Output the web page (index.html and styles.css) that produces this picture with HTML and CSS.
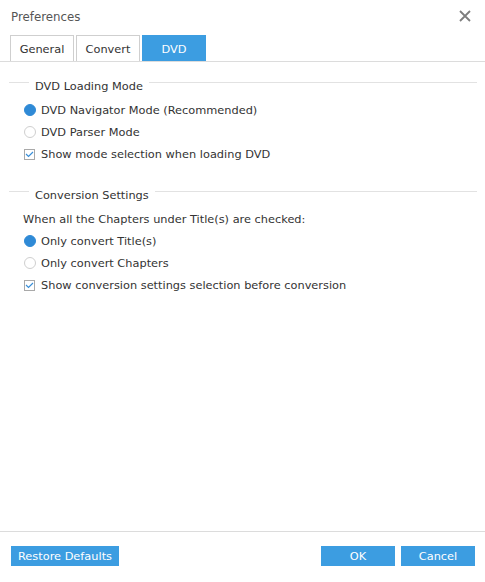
FILE: index.html
```html
<!DOCTYPE html>
<html>
<head>
<meta charset="utf-8">
<link rel="stylesheet" href="styles.css">
</head>
<body>
<div class="dialog">
  <div class="header">
    <span class="title">Preferences</span>
    <svg class="close" width="12" height="12" viewBox="0 0 12 12"><path d="M1 1 L11 11 M11 1 L1 11" stroke="#7d7d7d" stroke-width="1.8" fill="none"/></svg>
  </div>
  <div class="tabs">
    <div class="tab">General</div>
    <div class="tab">Convert</div>
    <div class="tab active">DVD</div>
  </div>
  <div class="content">
    <div class="section">
      <div class="legend"><span class="lline short"></span><span class="ltext">DVD Loading Mode</span><span class="lline grow"></span></div>
      <div class="row opt"><span class="radio on"></span><span>DVD Navigator Mode (Recommended)</span></div>
      <div class="row opt"><span class="radio"></span><span>DVD Parser Mode</span></div>
      <div class="row opt"><span class="check"><svg width="9" height="7" viewBox="0 0 9 7"><path d="M1 3 L3.5 5.5 L8 1" stroke="#3a8fd8" stroke-width="1.2" fill="none"/></svg></span><span>Show mode selection when loading DVD</span></div>
    </div>
    <div class="section second">
      <div class="legend"><span class="lline short"></span><span class="ltext">Conversion Settings</span><span class="lline grow"></span></div>
      <div class="row desc">When all the Chapters under Title(s) are checked:</div>
      <div class="row opt"><span class="radio on"></span><span>Only convert Title(s)</span></div>
      <div class="row opt"><span class="radio"></span><span>Only convert Chapters</span></div>
      <div class="row opt"><span class="check"><svg width="9" height="7" viewBox="0 0 9 7"><path d="M1 3 L3.5 5.5 L8 1" stroke="#3a8fd8" stroke-width="1.2" fill="none"/></svg></span><span>Show conversion settings selection before conversion</span></div>
    </div>
  </div>
  <div class="footer">
    <button class="btn restore">Restore Defaults</button>
    <div class="spacer"></div>
    <button class="btn ok">OK</button>
    <button class="btn cancel">Cancel</button>
  </div>
</div>
</body>
</html>
```
FILE: styles.css
```css
html, body {
  margin: 0;
  padding: 0;
  background: #ffffff;
}
body {
  font-family: "DejaVu Sans", Verdana, sans-serif;
  font-size: 11.35px;
  color: #333333;
}
.dialog {
  width: 485px;
  height: 582px;
  display: flex;
  flex-direction: column;
  background: #fff;
}
.header {
  height: 33px;
  display: flex;
  align-items: center;
  justify-content: space-between;
  padding: 0 14px 0 11px;
  margin-bottom: 2px;
}
.title {
  font-size: 11.8px;
  color: #555555;
}
.close {
  display: block;
  margin-top: -1px;
}
.tabs {
  display: flex;
  gap: 2px;
  padding-left: 10px;
  border-bottom: 1px solid #dcdcdc;
  height: 26px;
}
.tab {
  width: 64px;
  box-sizing: border-box;
  height: 26px;
  border: 1px solid #cfcfcf;
  border-bottom: none;
  display: flex;
  align-items: center;
  justify-content: center;
  color: #333;
  padding-top: 1px;
}
.tab.active {
  background: #3c9de1;
  border-color: #3c9de1;
  color: #ffffff;
}
.content {
  flex: 1;
  padding: 13px 8px 0 9px;
}
.section.second {
  margin-top: 19px;
}
.legend {
  display: flex;
  align-items: flex-start;
  height: 24px;
  line-height: 22px;
}
.lline {
  height: 1px;
  background: #e2e2e2;
  margin-top: 7px;
}
.lline.short {
  width: 20px;
}
.lline.grow {
  flex: 1;
}
.ltext {
  padding: 0 6px;
  color: #333;
}
.row {
  height: 22px;
  line-height: 22px;
  display: flex;
  align-items: center;
}
.row.desc {
  padding-left: 14px;
}
.row.opt {
  padding-left: 15px;
  gap: 5px;
}
.radio {
  width: 12px;
  height: 12px;
  box-sizing: border-box;
  border-radius: 50%;
  border: 1px solid #cfcfcf;
  flex: none;
}
.radio.on {
  background: #2f8ad6;
  border-color: #2f8ad6;
}
.check {
  width: 11px;
  height: 11px;
  box-sizing: border-box;
  border: 1px solid #a9a9a9;
  flex: none;
  display: flex;
  align-items: center;
  justify-content: center;
  margin-right: 1px;
}
.check svg {
  display: block;
}
.footer {
  border-top: 1px solid #dcdcdc;
  display: flex;
  padding: 14px 10px 16px 11px;
  gap: 6px;
}
.spacer {
  flex: 1;
}
.btn {
  height: 20px;
  border: none;
  background: #3c9de1;
  color: #ffffff;
  font-family: "DejaVu Sans", Verdana, sans-serif;
  font-size: 11.35px;
  padding: 0;
  margin: 0;
}
.btn.restore {
  width: 108px;
}
.btn.ok, .btn.cancel {
  width: 74px;
}
```
